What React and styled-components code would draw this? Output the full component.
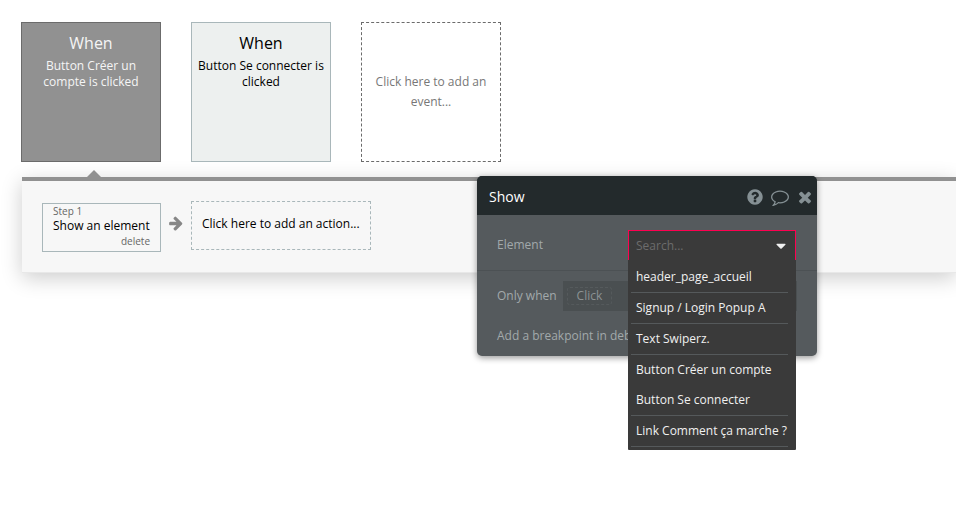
import React, { useState } from 'react';
import styled, { createGlobalStyle, css } from 'styled-components';

const GlobalStyle = createGlobalStyle`
    *, *::before, *::after {
        box-sizing: border-box;
    }
    body {
        margin: 0;
        background: #fff;
        font-family: "Open Sans", "Noto Sans", sans-serif;
        font-size: 12px;
        line-height: 16px;
        color: #000;
    }
    button, input {
        font: inherit;
        color: inherit;
    }
`;

const Page = styled.main`
    position: relative;
    min-height: 100vh;
    padding-top: 22px;
    overflow: hidden;
`;

const Events = styled.div`
    position: relative;
    z-index: 1;
    display: flex;
    gap: 30px;
    padding-left: 21px;
`;

const EventCard = styled.button`
    display: flex;
    flex-direction: column;
    align-items: center;
    width: 140px;
    height: 140px;
    padding: 10px 5px;
    border: 1px solid #a9b7ba;
    background: #edf0ef;
    text-align: center;
    ${props => props.$selected && css`
        border-color: #6b6b6b;
        background: #919191;
        color: #f5f5f5;
    `}
    ${props => props.$empty && css`
        justify-content: center;
        border: 1px dashed #6b6b6b;
        background: none;
        color: #777;
        line-height: 20px;
    `}
`;

const EventTitle = styled.span`
    margin-bottom: 5px;
    font-size: 16px;
    line-height: 20px;
`;

const Panel = styled.section`
    position: relative;
    display: flex;
    align-items: flex-start;
    margin: 15px 0 0 22px;
    padding: 20px;
    border-top: 4px solid #919191;
    border-bottom: 1px solid #e8e8e8;
    background: #f7f7f7;
    box-shadow: 0 5px 20px rgba(0, 0, 0, 0.2);
    &::before {
        content: '';
        position: absolute;
        left: 65px;
        top: -11px;
        border: 7px solid transparent;
        border-top: 0;
        border-bottom-color: #919191;
    }
`;

const Step = styled.div`
    display: flex;
    flex-direction: column;
    width: 119px;
    height: 49px;
    margin-top: 2px;
    padding: 0 10px;
    border: 1px solid #a9b7ba;
`;

const StepNumber = styled.span`
    font-size: 10px;
    line-height: 14px;
    color: #666;
`;

const StepDelete = styled.button`
    align-self: flex-end;
    padding: 0;
    border: 0;
    background: none;
    font-size: 10px;
    line-height: 14px;
    color: #666;
`;

const StepArrow = styled.span`
    display: flex;
    justify-content: center;
    width: 30px;
    padding-top: 14px;
    color: #868686;
`;

const AddAction = styled.button`
    width: 180px;
    height: 49px;
    padding: 0 10px 4px;
    border: 1px dashed #a9b7ba;
    background: none;
    text-align: left;
`;

const Editor = styled.section`
    position: absolute;
    left: 477px;
    top: 176px;
    z-index: 2;
    width: 340px;
    border-radius: 5px;
    background: #555a5d;
    color: #a2a9ab;
    box-shadow: 0 2px 6px rgba(0, 0, 0, 0.4);
`;

const EditorHeader = styled.header`
    display: flex;
    align-items: center;
    gap: 7px;
    height: 39px;
    padding: 2px 3px 0 12px;
    border-radius: 5px 5px 0 0;
    background: #232a2c;
`;

const EditorTitle = styled.h2`
    flex: 1;
    margin: 0;
    font-size: 14px;
    font-weight: 400;
    line-height: 20px;
    color: #fff;
`;

const IconButton = styled.button`
    display: flex;
    padding: 0;
    border: 0;
    background: none;
    color: #859094;
`;

const Field = styled.div`
    display: flex;
    align-items: center;
    justify-content: space-between;
    height: 56px;
    padding: 4px 21px 0 20px;
    border-bottom: 1px solid #4c5154;
`;

const Conditions = styled.div`
    padding: 10px 20px 12px;
`;

const Condition = styled.div`
    display: flex;
    align-items: center;
    gap: 6px;
`;

const Expression = styled.div`
    display: flex;
    align-items: center;
    flex: 1;
    height: 30px;
    padding: 0 4px;
    background: #4a4f51;
`;

const ExpressionButton = styled.button`
    height: 18px;
    padding: 0 9px;
    border: 1px dashed #555a5c;
    border-radius: 3px;
    background: none;
    line-height: 16px;
    color: #8c9294;
`;

const Breakpoint = styled.div`
    margin-top: 17px;
`;

const Combobox = styled.div`
    position: relative;
    width: 168px;
    height: 30px;
`;

const Dropdown = styled.div`
    position: absolute;
    top: 0;
    left: 0;
    right: 0;
    z-index: 1;
    padding-bottom: 3px;
    border-radius: 0 0 1px 1px;
    background: #3a3a3a;
    color: #f0f0f0;
`;

const SearchBox = styled.div`
    display: flex;
    align-items: center;
    height: 30px;
    margin-bottom: 2px;
    padding: 1px 6px 0 7px;
    border: 1px solid #ff0050;
    border-bottom: 0;
`;

const SearchInput = styled.input`
    flex: 1;
    min-width: 0;
    padding: 0;
    border: 0;
    outline: 0;
    background: none;
    &::placeholder {
        color: #6c6c6c;
        opacity: 1;
    }
`;

const Options = styled.ul`
    margin: 0;
    padding: 0 8px 0 3px;
    list-style: none;
`;

const Option = styled.li`
    border-bottom: ${props => props.$last ? '1px solid #55595b' : '0'};
`;

const OptionButton = styled.button`
    display: block;
    width: 100%;
    height: 30px;
    padding: 0 0 0 5px;
    border: 0;
    background: none;
    text-align: left;
    white-space: nowrap;
`;

const glyphs = {
	arrow: 'M1600 960q0 54-37 91l-651 651q-39 37-91 37-51 0-90-37l-75-75q-38-38-38-91t38-91l293-293h-704q-52 0-84.5-37.5t-32.5-90.5v-128q0-53 32.5-90.5t84.5-37.5h704l-293-294q-38-36-38-90t38-90l75-75q38-38 90-38 53 0 91 38l651 651q37 35 37 90z',
	help: 'M1024 1376v-192q0-14-9-23t-23-9h-192q-14 0-23 9t-9 23v192q0 14 9 23t23 9h192q14 0 23-9t9-23zm256-672q0-88-55.5-163t-138.5-116-170-41q-243 0-371 213-15 24 8 42l132 100q7 6 19 6 16 0 25-12 53-68 86-92 34-24 86-24 48 0 85.5 26t37.5 59q0 38-20 61t-68 45q-63 28-115.5 86.5t-52.5 125.5v36q0 14 9 23t23 9h192q14 0 23-9t9-23q0-19 21.5-49.5t54.5-49.5q32-18 49-28.5t46-35 44.5-48 28-60.5 12.5-81zm384 192q0 209-103 385.5t-279.5 279.5-385.5 103-385.5-103-279.5-279.5-103-385.5 103-385.5 279.5-279.5 385.5-103 385.5 103 279.5 279.5 103 385.5z',
	comment: 'M896 384q-204 0-381.5 69.5t-282 187.5-104.5 255q0 112 71.5 213.5t201.5 175.5l87 50-27 96q-24 91-70 172 152-63 275-171l43-38 57 6q69 8 130 8 204 0 381.5-69.5t282-187.5 104.5-255-104.5-255-282-187.5-381.5-69.5zm896 512q0 174-120 321.5t-326 233-450 85.5q-70 0-145-8-198 175-460 242-49 14-114 22h-5q-15 0-27-10.5t-16-27.5v-1q-3-4-.5-12t2-10 4.5-9.5l6-9 7-8.5 8-9q7-8 31-34.5t34.5-38 31-39.5 32.5-51 27-59 26-76q-157-89-247.5-220t-90.5-281q0-174 120-321.5t326-233 450-85.5 450 85.5 326 233 120 321.5z',
	close: 'M1490 1322q0 40-28 68l-136 136q-28 28-68 28t-68-28l-294-294-294 294q-28 28-68 28t-68-28l-136-136q-28-28-28-68t28-68l294-294-294-294q-28-28-28-68t28-68l136-136q28-28 68-28t68 28l294 294 294-294q28-28 68-28t68 28l136 136q28 28 28 68t-28 68l-294 294 294 294q28 28 28 68z',
	caret: 'M1408 704q0 26-19 45l-448 448q-19 19-45 19t-45-19l-448-448q-19-19-19-45t19-45 45-19h896q26 0 45 19t19 45z',
};

function Icon({ name, size = 18 }) {
	return <svg width={size} height={size} viewBox='0 0 1792 1792' fill='currentColor' aria-hidden='true'>
		<path d={glyphs[name]} />
	</svg>
}

const events = [
	{ text: 'Button Créer un compte is clicked' },
	{ text: 'Button Se connecter is clicked' },
];

// elements are grouped by parent, a line closes each group
const elements = [
	{ name: 'header_page_accueil', last: true },
	{ name: 'Signup / Login Popup A', last: true },
	{ name: 'Text Swiperz.', last: true },
	{ name: 'Button Créer un compte' },
	{ name: 'Button Se connecter', last: true },
	{ name: 'Link Comment ça marche ?', last: true },
];

function ElementPicker() {
	const [search, setSearch] = useState('');
	const found = elements.filter(({ name }) => name.toLowerCase().includes(search.toLowerCase()));

	return <Combobox>
		<Dropdown>
			<SearchBox>
				<SearchInput
					id='element'
					placeholder='Search...'
					autoComplete='off'
					value={search}
					onChange={e => setSearch(e.target.value)}
				/>
				<Icon name='caret' size={16} />
			</SearchBox>
			<Options>
				{found.map(({ name, last }) => <Option key={name} $last={last}>
					<OptionButton type='button' onClick={() => setSearch(name)}>{name}</OptionButton>
				</Option>)}
			</Options>
		</Dropdown>
	</Combobox>
}

export default function App() {
	const [selected, setSelected] = useState(0);

	return <Page>
		<GlobalStyle />
		<Events>
			{events.map(({ text }, i) => <EventCard key={text} type='button' $selected={i === selected} onClick={() => setSelected(i)}>
				<EventTitle>When</EventTitle>
				<span>{text}</span>
			</EventCard>)}
			<EventCard type='button' $empty>Click here to add an event...</EventCard>
		</Events>
		<Panel>
			<Step>
				<StepNumber>Step 1</StepNumber>
				<span>Show an element</span>
				<StepDelete type='button'>delete</StepDelete>
			</Step>
			<StepArrow><Icon name='arrow' size={16} /></StepArrow>
			<AddAction type='button'>Click here to add an action...</AddAction>
		</Panel>
		<Editor>
			<EditorHeader>
				<EditorTitle>Show</EditorTitle>
				<IconButton type='button' aria-label='Help'><Icon name='help' /></IconButton>
				<IconButton type='button' aria-label='Comment'><Icon name='comment' /></IconButton>
				<IconButton type='button' aria-label='Close'><Icon name='close' /></IconButton>
			</EditorHeader>
			<Field>
				<label htmlFor='element'>Element</label>
				<ElementPicker />
			</Field>
			<Conditions>
				<Condition>
					<span>Only when</span>
					<Expression><ExpressionButton type='button'>Click</ExpressionButton></Expression>
				</Condition>
				<Breakpoint>Add a breakpoint in deb</Breakpoint>
			</Conditions>
		</Editor>
	</Page>
}
